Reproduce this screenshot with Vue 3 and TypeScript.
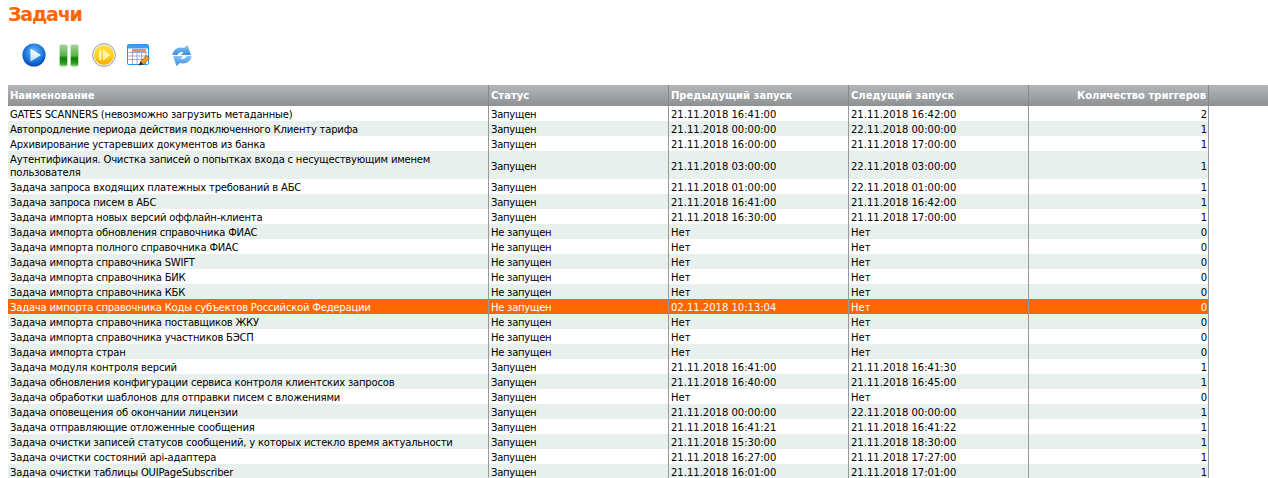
<script setup lang="ts">
interface Row { name: string; status: string; prev: string; next: string; count: number; selected?: boolean }
const ON = 'Запущен';
const OFF = 'Не запущен';
const NO = 'Нет';
const rows: Row[] = [
  { name: 'GATES SCANNERS (невозможно загрузить метаданные)', status: ON, prev: '21.11.2018 16:41:00', next: '21.11.2018 16:42:00', count: 2 },
  { name: 'Автопродление периода действия подключенного Клиенту тарифа', status: ON, prev: '21.11.2018 00:00:00', next: '22.11.2018 00:00:00', count: 1 },
  { name: 'Архивирование устаревших документов из банка', status: ON, prev: '21.11.2018 16:00:00', next: '21.11.2018 17:00:00', count: 1 },
  { name: 'Аутентификация. Очистка записей о попытках входа с несуществующим именем пользователя', status: ON, prev: '21.11.2018 03:00:00', next: '22.11.2018 03:00:00', count: 1 },
  { name: 'Задача запроса входящих платежных требований в АБС', status: ON, prev: '21.11.2018 01:00:00', next: '22.11.2018 01:00:00', count: 1 },
  { name: 'Задача запроса писем в АБС', status: ON, prev: '21.11.2018 16:41:00', next: '21.11.2018 16:42:00', count: 1 },
  { name: 'Задача импорта новых версий оффлайн-клиента', status: ON, prev: '21.11.2018 16:30:00', next: '21.11.2018 17:00:00', count: 1 },
  { name: 'Задача импорта обновления справочника ФИАС', status: OFF, prev: NO, next: NO, count: 0 },
  { name: 'Задача импорта полного справочника ФИАС', status: OFF, prev: NO, next: NO, count: 0 },
  { name: 'Задача импорта справочника SWIFT', status: OFF, prev: NO, next: NO, count: 0 },
  { name: 'Задача импорта справочника БИК', status: OFF, prev: NO, next: NO, count: 0 },
  { name: 'Задача импорта справочника КБК', status: OFF, prev: NO, next: NO, count: 0 },
  { name: 'Задача импорта справочника Коды субъектов Российской Федерации', status: OFF, prev: '02.11.2018 10:13:04', next: NO, count: 0, selected: true },
  { name: 'Задача импорта справочника поставщиков ЖКУ', status: OFF, prev: NO, next: NO, count: 0 },
  { name: 'Задача импорта справочника участников БЭСП', status: OFF, prev: NO, next: NO, count: 0 },
  { name: 'Задача импорта стран', status: OFF, prev: NO, next: NO, count: 0 },
  { name: 'Задача модуля контроля версий', status: ON, prev: '21.11.2018 16:41:00', next: '21.11.2018 16:41:30', count: 1 },
  { name: 'Задача обновления конфигурации сервиса контроля клиентских запросов', status: ON, prev: '21.11.2018 16:40:00', next: '21.11.2018 16:45:00', count: 1 },
  { name: 'Задача обработки шаблонов для отправки писем с вложениями', status: ON, prev: NO, next: NO, count: 0 },
  { name: 'Задача оповещения об окончании лицензии', status: ON, prev: '21.11.2018 00:00:00', next: '22.11.2018 00:00:00', count: 1 },
  { name: 'Задача отправляющие отложенные сообщения', status: ON, prev: '21.11.2018 16:41:21', next: '21.11.2018 16:41:22', count: 1 },
  { name: 'Задача очистки записей статусов сообщений, у которых истекло время актуальности', status: ON, prev: '21.11.2018 15:30:00', next: '21.11.2018 18:30:00', count: 1 },
  { name: 'Задача очистки состояний api-адаптера', status: ON, prev: '21.11.2018 16:27:00', next: '21.11.2018 17:27:00', count: 1 },
  { name: 'Задача очистки таблицы OUIPageSubscriber', status: ON, prev: '21.11.2018 16:01:00', next: '21.11.2018 17:01:00', count: 1 },
];
</script>

<template>
  <div class="page">
    <h1 class="title">Задачи</h1>
    <div class="toolbar">
      <span class="cell">
        <svg width="24" height="24" viewBox="0 0 24 24">
          <defs>
            <radialGradient id="b1" cx="50%" cy="38%" r="65%"><stop offset="0" stop-color="#6fc0f7"/><stop offset="0.6" stop-color="#1c78dc"/><stop offset="1" stop-color="#0b3aa6"/></radialGradient>
            <linearGradient id="b2" x1="0" y1="0" x2="0" y2="1"><stop offset="0" stop-color="#fff"/><stop offset="1" stop-color="#bfe2fa"/></linearGradient>
          </defs>
          <circle cx="12" cy="12" r="11.6" fill="url(#b1)"/>
          <path d="M8.5 5.5 L19 12 L8.5 18.5Z" fill="url(#b2)"/>
        </svg>
      </span>
      <span class="cell">
        <svg width="20" height="23" viewBox="0 0 20 23">
          <defs><linearGradient id="g1" x1="0" y1="0" x2="0" y2="1"><stop offset="0" stop-color="#a9d39f"/><stop offset="0.5" stop-color="#58b348"/><stop offset="0.62" stop-color="#0f7f0a"/><stop offset="0.85" stop-color="#2a9c1c"/><stop offset="1" stop-color="#8fd680"/></linearGradient></defs>
          <rect x="0.5" y="0.5" width="8" height="22" rx="2" fill="url(#g1)" stroke="#cfe5ca" stroke-width="0.6"/>
          <rect x="11.5" y="0.5" width="8" height="22" rx="2" fill="url(#g1)" stroke="#cfe5ca" stroke-width="0.6"/>
        </svg>
      </span>
      <span class="cell">
        <svg width="24" height="24" viewBox="0 0 24 24">
          <defs><linearGradient id="y1" x1="0" y1="0" x2="0" y2="1"><stop offset="0" stop-color="#ffe14d"/><stop offset="0.55" stop-color="#ffd21a"/><stop offset="1" stop-color="#f9a800"/></linearGradient></defs>
          <circle cx="12" cy="12" r="11.4" fill="#f6f6f6" stroke="#9c9c9c" stroke-width="1"/>
          <circle cx="12" cy="12" r="10" fill="url(#y1)"/>
          <rect x="7" y="7" width="2.4" height="10" fill="#fff2b0"/>
          <path d="M11 6.5 L18.5 12 L11 17.5Z" fill="#fff2b0"/>
        </svg>
      </span>
      <span class="cell">
        <svg width="23" height="22" viewBox="0 0 23 22">
          <rect x="0.5" y="0.5" width="21" height="20" rx="1" fill="#fff" stroke="#2a93e8"/>
          <rect x="1" y="1" width="20" height="3.5" fill="#3aa0ee"/>
          <rect x="5" y="5" width="13" height="3" fill="#f08a5a"/>
          <path d="M1.5 8.5h19M1.5 12h19M1.5 15.5h19M5.5 5v15M10 5v15M14.5 5v15M18.5 5v15" stroke="#a5a5c8" stroke-width="1" fill="none"/>
          <path d="M13.5 18 L19.5 11.5 L22.5 14 L16.5 20.5Z" fill="#f7a01e" stroke="#8a3c00" stroke-width="0.7"/>
          <path d="M11.5 21.5 L13.5 17.5 L16.5 20.5Z" fill="#2a2a2a"/>
        </svg>
      </span>
      <span class="cell wide">
        <svg width="20" height="21" viewBox="0 0 20 21">
          <defs><linearGradient id="r1" x1="0" y1="0" x2="0" y2="1"><stop offset="0" stop-color="#8ac4f4"/><stop offset="1" stop-color="#3c8fe2"/></linearGradient></defs>
          <path d="M0.5 10 C1 4 7 1.5 12 3 L15.5 0 L19 10 L9 10 L11.5 7.5 C9 6.5 6.5 7.5 5.5 10Z" fill="url(#r1)"/>
          <path d="M19.5 11 C19 17 13 19.5 8 18 L4.5 21 L1 11 L11 11 L8.5 13.5 C11 14.5 13.5 13.5 14.5 11Z" fill="url(#r1)"/>
        </svg>
      </span>
    </div>
    <table class="grid">
      <colgroup>
        <col class="c1" /><col class="c2" /><col class="c3" /><col class="c4" /><col class="c5" /><col />
      </colgroup>
      <thead>
        <tr>
          <th>Наименование</th>
          <th>Статус</th>
          <th>Предыдущий запуск</th>
          <th>Следущий запуск</th>
          <th class="num">Количество триггеров</th>
          <th class="rest"></th>
        </tr>
      </thead>
      <tbody>
        <tr v-for="(r, i) in rows" :key="i" :class="{ odd: i % 2 === 1, sel: r.selected }">
          <td class="tight">{{ r.name }}</td>
          <td class="tight st">{{ r.status }}</td>
          <td>{{ r.prev }}</td>
          <td>{{ r.next }}</td>
          <td class="num">{{ r.count }}</td>
          <td class="rest"></td>
        </tr>
      </tbody>
    </table>
  </div>
</template>

<style>
html, body { margin: 0; background: #fff; overflow: hidden; }
</style>

<style scoped>
.page { padding: 0 0 0 8px; height: 478px; overflow: hidden; box-sizing: border-box; font-family: "DejaVu Sans", sans-serif; }
.title { margin: 0; padding-top: 3px; height: 40px; box-sizing: border-box; font-size: 19px; line-height: 22px; font-weight: 700; letter-spacing: -1.2px; color: #ff6600; }
.toolbar { display: flex; align-items: center; height: 30px; padding-left: 8px; margin-bottom: 15px; }
.cell { flex: none; width: 35px; display: flex; justify-content: center; }
.cell svg { display: block; }
.cell.wide { margin-left: 8px; }
.grid { border-collapse: separate; border-spacing: 0; table-layout: fixed; width: 1260px; font-size: 10px; color: #000; }
.c1 { width: 481px; } .c2 { width: 180px; } .c3 { width: 180px; } .c4 { width: 180px; } .c5 { width: 180px; }
th { height: 21px; padding: 0 2px; text-align: left; color: #fff; font-weight: 700; background: linear-gradient(#b4b7ba, #8e9194); border-right: 1px solid #888; box-sizing: border-box; }
th.num { padding-right: 2px; }
td { padding: 2px 2px 0; line-height: 13px; border-right: 1px solid #999; box-sizing: border-box; }
.tight { letter-spacing: -0.19px; }
.st { letter-spacing: -0.25px; }
.num { text-align: right; padding-right: 1px; }
th.rest, td.rest { border-right: 0; }
.odd td:not(.rest) { background: #e8f0ed; }
.sel td:not(.rest) { background: #ff6600; color: #fff; }
</style>
